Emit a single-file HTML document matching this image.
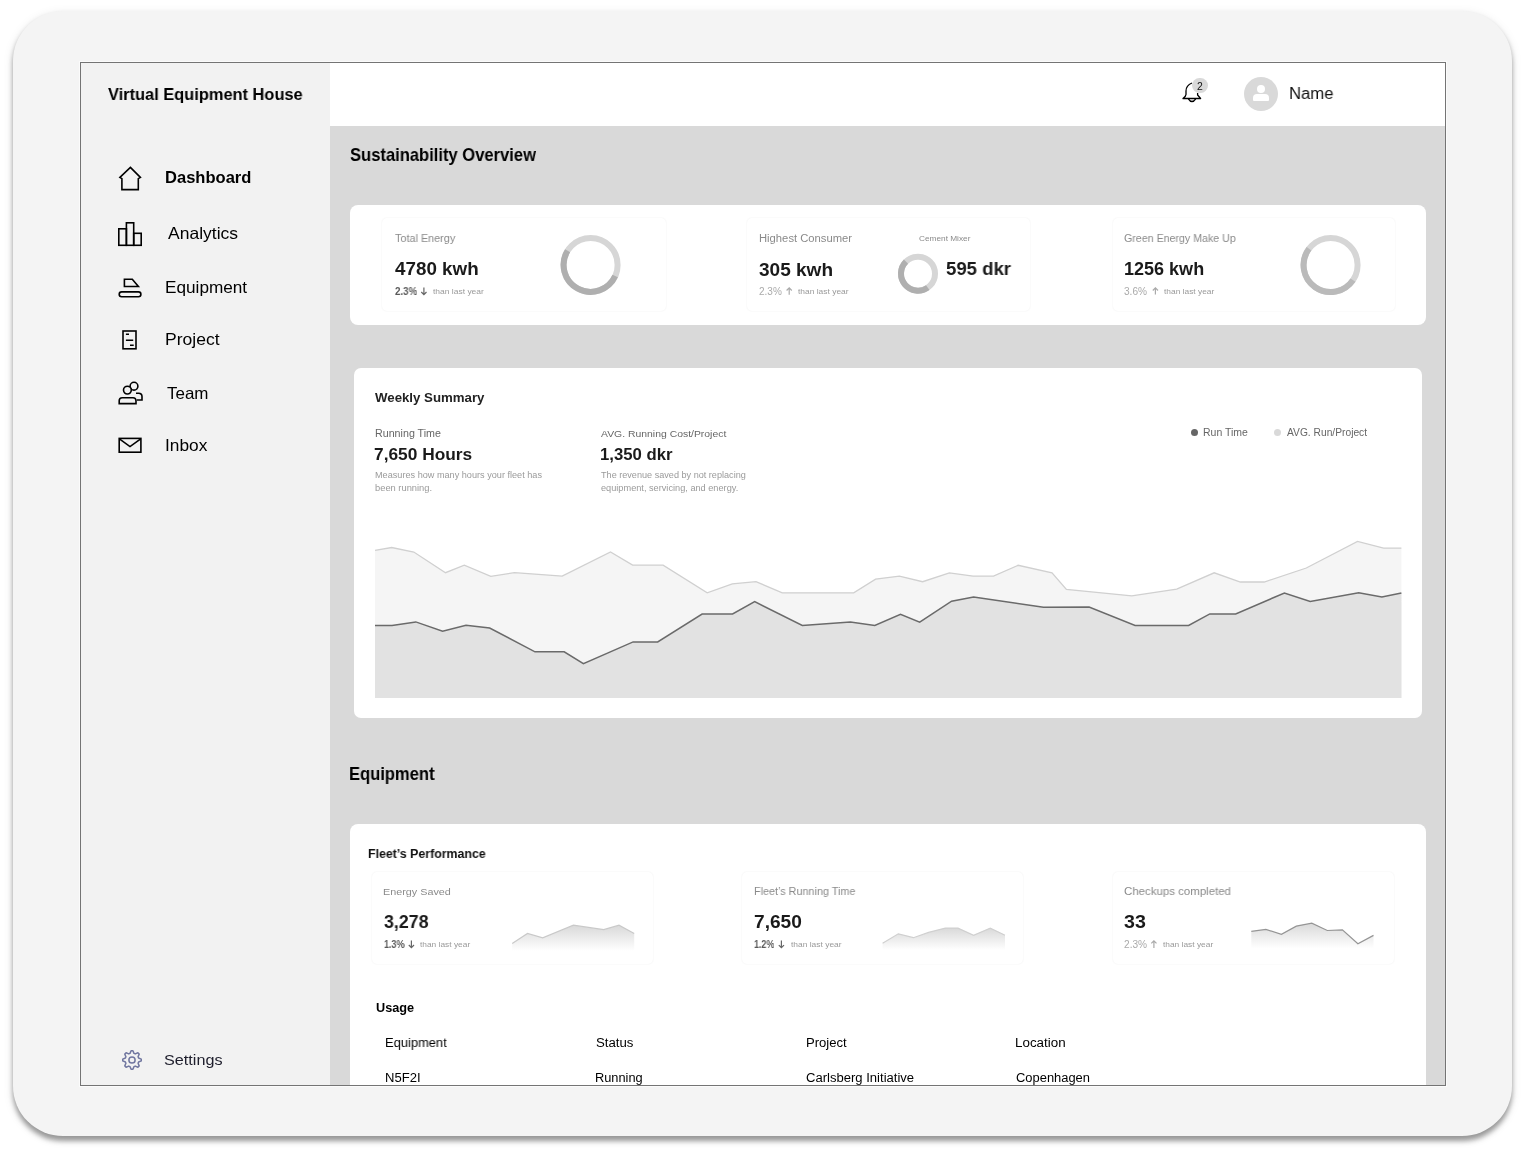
<!DOCTYPE html><html><head><meta charset="utf-8"><style>
*{margin:0;padding:0;box-sizing:border-box}
html,body{width:1533px;height:1149px;overflow:hidden;background:#fff;font-family:"Liberation Sans",sans-serif}
.t{position:absolute;white-space:nowrap;line-height:1;will-change:transform}
.a{position:absolute}
.card{position:absolute;background:#fff;border-radius:8px}
.ic{position:absolute;background:#fff;border-radius:5px;box-shadow:0 0 2px rgba(0,0,0,.07)}
</style></head><body>
<div class="a" style="left:13px;top:10.7px;width:1499px;height:1125.3px;border-radius:50px;background:#f4f4f4;box-shadow:0 4.8px 5.8px rgba(0,0,0,.36),0 3px 11px rgba(0,0,0,.1)"></div>
<div class="a" style="left:79px;top:61px;width:1368px;height:1026px;border:1px solid #fbfbfb"></div>
<div class="a" style="left:80px;top:62px;width:1366px;height:1024px;border:1px solid #747474;background:#d9d9d9"></div>
<div class="a" style="left:81px;top:63px;width:249px;height:1022px;background:#f2f2f2"></div>
<div class="a" style="left:330px;top:63px;width:1115px;height:63px;background:#fff"></div>
<div class="t" id="t0" style="left:108.09px;top:86px;font-size:17.30px;font-weight:700;color:#000;transform:scaleX(0.9488);transform-origin:0 0;">Virtual Equipment House</div>
<div class="t" id="t1" style="left:165.49px;top:169px;font-size:16.28px;font-weight:700;color:#000;transform:scaleX(1.0168);transform-origin:0 0;">Dashboard</div>
<div class="t" id="t2" style="left:167.57px;top:225px;font-size:16.28px;font-weight:400;color:#000;transform:scaleX(1.0764);transform-origin:0 0;">Analytics</div>
<div class="t" id="t3" style="left:165.19px;top:279px;font-size:16.28px;font-weight:400;color:#000;transform:scaleX(1.0562);transform-origin:0 0;">Equipment</div>
<div class="t" id="t4" style="left:165.16px;top:332px;font-size:16.72px;font-weight:400;color:#000;transform:scaleX(1.0494);transform-origin:0 0;">Project</div>
<div class="t" id="t5" style="left:166.72px;top:386px;font-size:16.72px;font-weight:400;color:#000;transform:scaleX(1.0161);transform-origin:0 0;">Team</div>
<div class="t" id="t6" style="left:165.00px;top:437px;font-size:16.42px;font-weight:400;color:#000;transform:scaleX(1.0534);transform-origin:0 0;">Inbox</div>
<div class="t" id="t7" style="left:163.76px;top:1053px;font-size:14.83px;font-weight:400;color:#1e1e2c;transform:scaleX(1.0919);transform-origin:0 0;">Settings</div>
<svg class="a" style="left:0;top:0" width="1533" height="1149" viewBox="0 0 1533 1149" fill="none" stroke="#000" stroke-width="1.6" stroke-linejoin="miter">
<path d="M130.4 167.4 L140.4 177.4 L138.3 178.6 L138.3 189.6 L121.9 189.6 L121.9 178.6 L119.9 177.4 Z"/>
<rect x="118.8" y="228.8" width="7.6" height="16.5"/>
<rect x="126.4" y="222.8" width="7.3" height="22.5"/>
<rect x="133.7" y="233.3" width="7.5" height="12"/>
<path d="M124.4 279.2 L132.3 279.2 L138.4 286.5 L124.4 286.5 Z"/>
<rect x="119.2" y="291.9" width="21.7" height="4.9" rx="2.45"/>
<rect x="123" y="331" width="13" height="17.8"/>
<path d="M125.9 334.2 H129 M125.9 340.2 H133.2 M130 345.2 H133.7"/>
<circle cx="134" cy="386.2" r="3.9"/>
<path d="M136 393.2 H138.6 Q142 393.2 142 396.6 V400 H136.8"/>
<circle cx="127.4" cy="390.1" r="3.9" fill="#f2f2f2"/>
<path d="M119.2 403.6 V400.7 Q119.2 397.7 122.2 397.7 H133 Q136 397.7 136 400.7 V403.6 Z" fill="#f2f2f2"/>
<rect x="119.2" y="438.4" width="21.7" height="13.8"/>
<path d="M119.4 438.8 L130 446.6 L140.7 438.8"/>
</svg>
<svg class="a" style="left:0;top:0" width="1533" height="1149" fill="none" stroke="#7177a0" stroke-width="1.5" stroke-linejoin="round"><path d="M131.09 1050.74 L132.91 1050.74 L134.00 1053.40 L135.25 1053.91 L137.90 1052.81 L139.19 1054.10 L138.09 1056.75 L138.60 1058.00 L141.26 1059.09 L141.26 1060.91 L138.60 1062.00 L138.09 1063.25 L139.19 1065.90 L137.90 1067.19 L135.25 1066.09 L134.00 1066.60 L132.91 1069.26 L131.09 1069.26 L130.00 1066.60 L128.75 1066.09 L126.10 1067.19 L124.81 1065.90 L125.91 1063.25 L125.40 1062.00 L122.74 1060.91 L122.74 1059.09 L125.40 1058.00 L125.91 1056.75 L124.81 1054.10 L126.10 1052.81 L128.75 1053.91 L130.00 1053.40Z"/><circle cx="132" cy="1060" r="3.1"/></svg>
<svg class="a" style="left:0;top:0" width="1533" height="1149" fill="none" stroke="#000" stroke-width="1.3" stroke-linejoin="round">
<path d="M1192 83 Q1186 85.5 1186 91 V94.5 Q1186 96 1183 98.5 H1200.6 L1197.6 95 V93"/>
<path d="M1188.4 98.8 Q1190 101.5 1192 101.5 Q1194 101.5 1195.7 98.8"/>
</svg>
<div class="a" style="left:1192.2px;top:77.9px;width:15.6px;height:15.6px;border-radius:50%;background:#d9d9d9"></div>
<div class="t" id="t8" style="left:1196.68px;top:82px;font-size:10.40px;font-weight:400;color:#111;">2</div>
<div class="a" style="left:1244px;top:77px;width:34px;height:34px;border-radius:50%;background:#d9d9d9"></div>
<div class="a" style="left:1257.1px;top:85.3px;width:7.8px;height:7.8px;border-radius:50%;background:#fff"></div>
<div class="a" style="left:1253px;top:94.3px;width:16px;height:6.8px;border-radius:4px 4px 1px 1px;background:#fff"></div>
<div class="t" id="t9" style="left:1289.23px;top:85px;font-size:17.30px;font-weight:400;color:#111;transform:scaleX(0.9653);transform-origin:0 0;">Name</div>
<div class="t" id="t10" style="left:349.52px;top:147px;font-size:17.73px;font-weight:700;color:#000;transform:scaleX(0.9348);transform-origin:0 0;">Sustainability Overview</div>
<div class="card" style="left:350px;top:205px;width:1076px;height:120px"></div>
<div class="ic" style="left:382px;top:218px;width:283.5px;height:93px"></div>
<div class="ic" style="left:747.4px;top:218px;width:283px;height:93px"></div>
<div class="ic" style="left:1112.8px;top:218px;width:281.8px;height:93px"></div>
<div class="t" id="t11" style="left:394.76px;top:233px;font-size:11.05px;font-weight:400;color:#8a8a8a;transform:scaleX(0.9798);transform-origin:0 0;">Total Energy</div>
<div class="t" id="t12" style="left:394.72px;top:260px;font-size:18.75px;font-weight:700;color:#1a1a1a;transform:scaleX(1.0031);transform-origin:0 0;">4780 kwh</div>
<div class="t" id="t13" style="left:394.66px;top:287px;font-size:10.00px;font-weight:700;color:#5a5a5a;transform:scaleX(0.9736);transform-origin:0 0;">2.3%</div>
<svg class="a" style="left:0;top:0" width="1533" height="1149" fill="none" stroke="#666" stroke-width="1.2"><path d="M423.90 287.60 V294.60 M421.30 292.00 L423.90 294.60 L426.50 292.00"/></svg>
<div class="t" id="t14" style="left:432.57px;top:288px;font-size:8.00px;font-weight:400;color:#9a9a9a;transform:scaleX(1.0591);transform-origin:0 0;">than last year</div>
<div class="t" id="t15" style="left:758.88px;top:233px;font-size:10.61px;font-weight:400;color:#8a8a8a;transform:scaleX(1.0598);transform-origin:0 0;">Highest Consumer</div>
<div class="t" id="t16" style="left:759.36px;top:260px;font-size:19.04px;font-weight:700;color:#1a1a1a;">305 kwh</div>
<div class="t" id="t17" style="left:759.30px;top:287px;font-size:10.00px;font-weight:400;color:#aaa;">2.3%</div>
<svg class="a" style="left:0;top:0" width="1533" height="1149" fill="none" stroke="#aaa" stroke-width="1.2"><path d="M789.20 294.70 V287.90 M786.60 290.50 L789.20 287.90 L791.80 290.50"/></svg>
<div class="t" id="t18" style="left:797.77px;top:288px;font-size:8.00px;font-weight:400;color:#9a9a9a;transform:scaleX(1.0528);transform-origin:0 0;">than last year</div>
<div class="t" id="t19" style="left:919.28px;top:235px;font-size:7.70px;font-weight:400;color:#8a8a8a;transform:scaleX(1.0752);transform-origin:0 0;">Cement Mixer</div>
<div class="t" id="t20" style="left:946.13px;top:260px;font-size:18.75px;font-weight:700;color:#1a1a1a;transform:scaleX(0.9906);transform-origin:0 0;">595 dkr</div>
<div class="t" id="t21" style="left:1124.26px;top:233px;font-size:11.34px;font-weight:400;color:#8a8a8a;transform:scaleX(0.9392);transform-origin:0 0;">Green Energy Make Up</div>
<div class="t" id="t22" style="left:1123.66px;top:261px;font-size:17.88px;font-weight:700;color:#1a1a1a;transform:scaleX(1.0090);transform-origin:0 0;">1256 kwh</div>
<div class="t" id="t23" style="left:1124.41px;top:287px;font-size:10.00px;font-weight:400;color:#aaa;transform:scaleX(1.0109);transform-origin:0 0;">3.6%</div>
<svg class="a" style="left:0;top:0" width="1533" height="1149" fill="none" stroke="#aaa" stroke-width="1.2"><path d="M1155.40 294.60 V287.90 M1152.80 290.50 L1155.40 287.90 L1158.00 290.50"/></svg>
<div class="t" id="t24" style="left:1163.87px;top:288px;font-size:8.00px;font-weight:400;color:#9a9a9a;transform:scaleX(1.0465);transform-origin:0 0;">than last year</div>
<svg class="a" style="left:0;top:0" width="1533" height="1149" fill="none"><circle cx="590.6" cy="264.9" r="27" stroke="#d6d6d6" stroke-width="6"/><path d="M615.17 276.10 A27 27 0 1 1 567.63 250.71" stroke="#afafaf" stroke-width="6"/><circle cx="918" cy="273.7" r="17" stroke="#d6d6d6" stroke-width="6"/><path d="M927.75 287.63 A17 17 0 0 1 905.98 261.68" stroke="#afafaf" stroke-width="6"/><circle cx="1330.6" cy="265" r="27" stroke="#d6d6d6" stroke-width="6"/><path d="M1352.98 280.10 A27 27 0 1 1 1309.04 248.75" stroke="#bababa" stroke-width="6"/></svg>
<div class="card" style="left:354.4px;top:368px;width:1067.6px;height:350.4px;border-radius:7px"></div>
<div class="t" id="t25" style="left:375.19px;top:392px;font-size:12.21px;font-weight:700;color:#222;transform:scaleX(1.0857);transform-origin:0 0;">Weekly Summary</div>
<div class="t" id="t26" style="left:374.52px;top:429px;font-size:10.03px;font-weight:400;color:#666;transform:scaleX(1.0673);transform-origin:0 0;">Running Time</div>
<div class="t" id="t27" style="left:374.46px;top:447px;font-size:16.72px;font-weight:700;color:#1a1a1a;transform:scaleX(1.0364);transform-origin:0 0;">7,650 Hours</div>
<div class="t" id="t28" style="left:374.65px;top:471px;font-size:8.60px;font-weight:400;color:#9a9a9a;transform:scaleX(1.0625);transform-origin:0 0;">Measures how many hours your fleet has</div>
<div class="t" id="t29" style="left:374.80px;top:484px;font-size:8.60px;font-weight:400;color:#9a9a9a;transform:scaleX(1.0855);transform-origin:0 0;">been running.</div>
<div class="t" id="t30" style="left:600.88px;top:429px;font-size:9.88px;font-weight:400;color:#666;transform:scaleX(1.0536);transform-origin:0 0;">AVG. Running Cost/Project</div>
<div class="t" id="t31" style="left:599.85px;top:447px;font-size:16.72px;font-weight:700;color:#1a1a1a;transform:scaleX(0.9967);transform-origin:0 0;">1,350 dkr</div>
<div class="t" id="t32" style="left:600.70px;top:471px;font-size:8.60px;font-weight:400;color:#9a9a9a;transform:scaleX(1.0597);transform-origin:0 0;">The revenue saved by not replacing</div>
<div class="t" id="t33" style="left:600.51px;top:484px;font-size:8.60px;font-weight:400;color:#9a9a9a;transform:scaleX(1.0692);transform-origin:0 0;">equipment, servicing, and energy.</div>
<div class="a" style="left:1191px;top:428.7px;width:7.2px;height:7.2px;border-radius:50%;background:#666"></div>
<div class="t" id="t34" style="left:1202.64px;top:428px;font-size:10.17px;font-weight:400;color:#666;transform:scaleX(1.0312);transform-origin:0 0;">Run Time</div>
<div class="a" style="left:1274.1px;top:428.7px;width:7.2px;height:7.2px;border-radius:50%;background:#d9d9d9"></div>
<div class="t" id="t35" style="left:1286.58px;top:428px;font-size:10.17px;font-weight:400;color:#666;transform:scaleX(1.0087);transform-origin:0 0;">AVG. Run/Project</div>
<svg class="a" style="left:0;top:0" width="1533" height="1149"><polygon points="375.0,550.4 391.7,547.5 413.8,552.0 445.5,572.7 464.3,565.1 490.8,576.3 514.5,572.7 562.2,576.1 610.5,552.0 632.6,565.1 663.1,565.1 707.2,592.8 732.3,583.9 756.0,581.7 782.3,592.8 853.7,592.8 875.6,579.2 899.4,576.1 922.6,581.7 949.4,572.9 973.1,576.1 993.5,576.1 1018.1,565.3 1052.0,572.9 1066.4,589.4 1131.7,595.8 1176.7,589.2 1214.2,572.8 1240.4,582.0 1264.2,582.0 1306.3,568.0 1357.5,541.4 1383.6,548.2 1401.4,548.2 1401.4,698 375,698" fill="#f5f5f5"/><polyline points="375.0,550.4 391.7,547.5 413.8,552.0 445.5,572.7 464.3,565.1 490.8,576.3 514.5,572.7 562.2,576.1 610.5,552.0 632.6,565.1 663.1,565.1 707.2,592.8 732.3,583.9 756.0,581.7 782.3,592.8 853.7,592.8 875.6,579.2 899.4,576.1 922.6,581.7 949.4,572.9 973.1,576.1 993.5,576.1 1018.1,565.3 1052.0,572.9 1066.4,589.4 1131.7,595.8 1176.7,589.2 1214.2,572.8 1240.4,582.0 1264.2,582.0 1306.3,568.0 1357.5,541.4 1383.6,548.2 1401.4,548.2" fill="none" stroke="#d0d0d0" stroke-width="1.3"/><polygon points="375.0,625.5 392.0,625.5 415.8,621.9 442.6,631.3 466.0,625.3 489.7,628.0 535.0,651.8 564.2,651.8 583.4,663.6 633.1,641.9 657.7,641.9 702.1,614.0 732.6,614.0 754.7,601.7 802.3,625.5 850.4,622.1 874.8,625.5 900.5,614.3 919.7,622.1 951.6,601.2 973.6,597.0 1043.5,607.2 1089.1,607.1 1135.1,625.5 1188.6,625.4 1209.8,613.9 1235.7,613.9 1284.4,593.0 1310.2,601.5 1358.7,592.7 1381.9,597.1 1401.4,593.1 1401.4,698 375,698" fill="#e2e2e2"/><polyline points="375.0,625.5 392.0,625.5 415.8,621.9 442.6,631.3 466.0,625.3 489.7,628.0 535.0,651.8 564.2,651.8 583.4,663.6 633.1,641.9 657.7,641.9 702.1,614.0 732.6,614.0 754.7,601.7 802.3,625.5 850.4,622.1 874.8,625.5 900.5,614.3 919.7,622.1 951.6,601.2 973.6,597.0 1043.5,607.2 1089.1,607.1 1135.1,625.5 1188.6,625.4 1209.8,613.9 1235.7,613.9 1284.4,593.0 1310.2,601.5 1358.7,592.7 1381.9,597.1 1401.4,593.1" fill="none" stroke="#6a6a6a" stroke-width="1.5"/></svg>
<div class="t" id="t36" style="left:348.89px;top:766px;font-size:17.59px;font-weight:700;color:#000;transform:scaleX(0.9414);transform-origin:0 0;">Equipment</div>
<div class="card" style="left:350px;top:824px;width:1076px;height:261px;border-radius:8px 8px 0 0"></div>
<div class="t" id="t37" style="left:367.57px;top:848px;font-size:12.65px;font-weight:700;color:#111;transform:scaleX(0.9782);transform-origin:0 0;">Fleet&#8217;s Performance</div>
<div class="ic" style="left:372px;top:872px;width:281px;height:92px"></div>
<div class="ic" style="left:742px;top:872px;width:281px;height:92px"></div>
<div class="ic" style="left:1113px;top:872px;width:281px;height:92px"></div>
<div class="t" id="t38" style="left:383.11px;top:887px;font-size:9.88px;font-weight:400;color:#8a8a8a;transform:scaleX(1.0941);transform-origin:0 0;">Energy Saved</div>
<div class="t" id="t39" style="left:384.09px;top:913px;font-size:18.60px;font-weight:700;color:#1a1a1a;transform:scaleX(0.9576);transform-origin:0 0;">3,278</div>
<div class="t" id="t40" style="left:383.64px;top:940px;font-size:10.00px;font-weight:700;color:#5a5a5a;transform:scaleX(0.8948);transform-origin:0 0;">1.3%</div>
<svg class="a" style="left:0;top:0" width="1533" height="1149" fill="none" stroke="#666" stroke-width="1.2"><path d="M411.40 940.50 V947.60 M408.80 945.00 L411.40 947.60 L414.00 945.00"/></svg>
<div class="t" id="t41" style="left:419.97px;top:941px;font-size:8.00px;font-weight:400;color:#9a9a9a;transform:scaleX(1.0444);transform-origin:0 0;">than last year</div>
<div class="t" id="t42" style="left:753.61px;top:886px;font-size:11.34px;font-weight:400;color:#8a8a8a;transform:scaleX(0.9545);transform-origin:0 0;">Fleet&#8217;s Running Time</div>
<div class="t" id="t43" style="left:753.68px;top:913px;font-size:18.46px;font-weight:700;color:#1a1a1a;transform:scaleX(1.0383);transform-origin:0 0;">7,650</div>
<div class="t" id="t44" style="left:753.94px;top:940px;font-size:10.00px;font-weight:700;color:#5a5a5a;transform:scaleX(0.8903);transform-origin:0 0;">1.2%</div>
<svg class="a" style="left:0;top:0" width="1533" height="1149" fill="none" stroke="#666" stroke-width="1.2"><path d="M781.40 940.50 V947.70 M778.80 945.10 L781.40 947.70 L784.00 945.10"/></svg>
<div class="t" id="t45" style="left:790.57px;top:941px;font-size:8.00px;font-weight:400;color:#9a9a9a;transform:scaleX(1.0528);transform-origin:0 0;">than last year</div>
<div class="t" id="t46" style="left:1124.22px;top:885px;font-size:11.63px;font-weight:400;color:#8a8a8a;transform:scaleX(0.9849);transform-origin:0 0;">Checkups completed</div>
<div class="t" id="t47" style="left:1124.35px;top:914px;font-size:17.73px;font-weight:700;color:#1a1a1a;transform:scaleX(1.1087);transform-origin:0 0;">33</div>
<div class="t" id="t48" style="left:1124.29px;top:940px;font-size:10.00px;font-weight:400;color:#aaa;transform:scaleX(1.0120);transform-origin:0 0;">2.3%</div>
<svg class="a" style="left:0;top:0" width="1533" height="1149" fill="none" stroke="#aaa" stroke-width="1.2"><path d="M1153.90 948.00 V940.80 M1151.30 943.40 L1153.90 940.80 L1156.50 943.40"/></svg>
<div class="t" id="t49" style="left:1163.07px;top:941px;font-size:8.00px;font-weight:400;color:#9a9a9a;transform:scaleX(1.0444);transform-origin:0 0;">than last year</div>
<svg class="a" style="left:0;top:0" width="1533" height="1149"><linearGradient id="g1" x1="0" y1="0" x2="0" y2="1"><stop offset="0" stop-color="#d9d9d9"/><stop offset="1" stop-color="#fff"/></linearGradient><polygon points="512.2,943.5 527.5,933.5 542.7,937.9 573.4,925.2 603.7,929.7 619.0,925.2 634.2,933.5 634.2,951 512.2,951" fill="url(#g1)"/><polyline points="512.2,943.5 527.5,933.5 542.7,937.9 573.4,925.2 603.7,929.7 619.0,925.2 634.2,933.5" fill="none" stroke="#c9c9c9" stroke-width="1.2"/><linearGradient id="g2" x1="0" y1="0" x2="0" y2="1"><stop offset="0" stop-color="#d9d9d9"/><stop offset="1" stop-color="#fff"/></linearGradient><polygon points="882.6,943.2 898.3,933.8 913.4,937.7 928.6,932.4 945.3,928.1 958.0,928.1 973.6,935.3 990.3,928.1 1005.0,935.3 1005,950 882.6,950" fill="url(#g2)"/><polyline points="882.6,943.2 898.3,933.8 913.4,937.7 928.6,932.4 945.3,928.1 958.0,928.1 973.6,935.3 990.3,928.1 1005.0,935.3" fill="none" stroke="#d0d0d0" stroke-width="1.2"/><linearGradient id="g3" x1="0" y1="0" x2="0" y2="1"><stop offset="0" stop-color="#d9d9d9"/><stop offset="1" stop-color="#fff"/></linearGradient><polygon points="1251.3,931.4 1265.9,929.4 1281.4,934.3 1296.3,926.1 1311.8,923.2 1327.3,930.5 1342.4,929.9 1357.9,943.8 1373.5,935.4 1373.5,948.5 1251.3,948.5" fill="url(#g3)"/><polyline points="1251.3,931.4 1265.9,929.4 1281.4,934.3 1296.3,926.1 1311.8,923.2 1327.3,930.5 1342.4,929.9 1357.9,943.8 1373.5,935.4" fill="none" stroke="#959595" stroke-width="1.2"/></svg>
<div class="t" id="t50" style="left:375.64px;top:1002px;font-size:12.21px;font-weight:700;color:#000;transform:scaleX(1.0397);transform-origin:0 0;">Usage</div>
<div class="t" id="t51" style="left:385.44px;top:1036px;font-size:13.08px;font-weight:400;color:#000;transform:scaleX(0.9876);transform-origin:0 0;">Equipment</div>
<div class="t" id="t52" style="left:595.90px;top:1036px;font-size:13.08px;font-weight:400;color:#000;transform:scaleX(1.0108);transform-origin:0 0;">Status</div>
<div class="t" id="t53" style="left:805.63px;top:1036px;font-size:13.08px;font-weight:400;color:#000;transform:scaleX(0.9937);transform-origin:0 0;">Project</div>
<div class="t" id="t54" style="left:1015.40px;top:1036px;font-size:13.08px;font-weight:400;color:#000;transform:scaleX(1.0246);transform-origin:0 0;">Location</div>
<div class="t" id="t55" style="left:385.43px;top:1072px;font-size:12.65px;font-weight:400;color:#000;transform:scaleX(1.0331);transform-origin:0 0;">N5F2I</div>
<div class="t" id="t56" style="left:595.45px;top:1072px;font-size:12.65px;font-weight:400;color:#000;transform:scaleX(1.0123);transform-origin:0 0;">Running</div>
<div class="t" id="t57" style="left:806.04px;top:1072px;font-size:12.65px;font-weight:400;color:#000;transform:scaleX(1.0330);transform-origin:0 0;">Carlsberg Initiative</div>
<div class="t" id="t58" style="left:1015.84px;top:1072px;font-size:12.65px;font-weight:400;color:#000;transform:scaleX(1.0219);transform-origin:0 0;">Copenhagen</div>
</body></html>
